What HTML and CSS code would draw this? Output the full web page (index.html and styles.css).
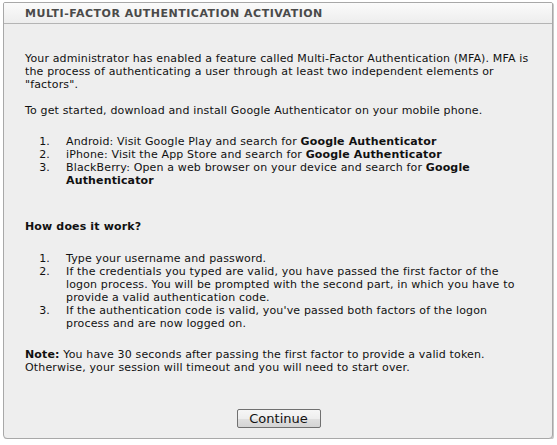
FILE: index.html
```html
<!DOCTYPE html>
<html>
<head>
<meta charset="utf-8">
<link rel="stylesheet" href="styles.css">
</head>
<body>
<div class="panel">
  <div class="header">MULTI-FACTOR AUTHENTICATION ACTIVATION</div>
  <div class="content">
    <p class="p-intro">Your administrator has enabled a feature called Multi-Factor Authentication (MFA). MFA is the process of authenticating a user through at least two independent elements or "factors".</p>
    <p class="p-start">To get started, download and install Google Authenticator on your mobile phone.</p>
    <ol class="list list-apps">
      <li><span>Android: Visit Google Play and search for <b>Google Authenticator</b></span></li>
      <li><span>iPhone: Visit the App Store and search for <b>Google Authenticator</b></span></li>
      <li><span>BlackBerry: Open a web browser on your device and search for <b>Google Authenticator</b></span></li>
    </ol>
    <p class="p-how"><b>How does it work?</b></p>
    <ol class="list list-steps">
      <li><span>Type your username and password.</span></li>
      <li><span>If the credentials you typed are valid, you have passed the first factor of the logon process. You will be prompted with the second part, in which you have to provide a valid authentication code.</span></li>
      <li><span>If the authentication code is valid, you've passed both factors of the logon process and are now logged on.</span></li>
    </ol>
    <p class="p-note"><b>Note:</b> You have 30 seconds after passing the first factor to provide a valid token. Otherwise, your session will timeout and you will need to start over.</p>
    <div class="actions"><button class="btn" type="button">Continue</button></div>
  </div>
</div>
</body>
</html>
```
FILE: styles.css
```css
html, body {
  margin: 0;
  padding: 0;
  background: #ffffff;
}
body {
  font-family: "DejaVu Sans", Verdana, sans-serif;
  font-size: 11px;
  line-height: 13px;
  color: #111111;
  letter-spacing: 0.15px;
}
.panel {
  margin: 2px 0 0 3px;
  width: 548px;
  height: 435px;
  border: 1px solid #a8a8a8;
  border-radius: 2px 2px 4px 4px;
  background: #eeeeee;
  box-shadow: 1px 1px 0 #c8c8c8;
  display: flex;
  flex-direction: column;
  overflow: hidden;
}
.header {
  height: 20px;
  line-height: 21px;
  padding-left: 21px;
  font-weight: bold;
  color: #4a4a4a;
  background: linear-gradient(#fbfbfb, #ededed);
  border-bottom: 1px solid #b4b4b4;
  letter-spacing: 0.5px;
}
.content {
  flex: 1;
  padding: 28px 20px 0 21px;
  display: flex;
  flex-direction: column;
}
p {
  margin: 0;
}
.p-intro {
  margin-bottom: 13px;
}
.p-start {
  margin-bottom: 18px;
}
.list {
  list-style: none;
  margin: 0;
  padding: 0;
  counter-reset: item;
}
.list li {
  counter-increment: item;
  display: grid;
  grid-template-columns: 41px 1fr;
}
.list li::before {
  content: counter(item) ".";
  justify-self: end;
  padding-right: 16px;
}
.list-apps {
  margin-bottom: 33px;
}
.p-how {
  margin-bottom: 19px;
}
.list-steps {
  margin-bottom: 18px;
}
.actions {
  margin-top: auto;
  padding-bottom: 10px;
  display: flex;
  justify-content: center;
}
.btn {
  font-family: "DejaVu Sans", Verdana, sans-serif;
  font-size: 13px;
  color: #111;
  width: 84px;
  height: 19px;
  padding: 0;
  line-height: 16px;
  border: 1px solid #707070;
  border-radius: 2px;
  background: linear-gradient(#f6f6f6 0%, #eeeeee 50%, #e0e0e0 51%, #d4d4d4 100%);
}
```
